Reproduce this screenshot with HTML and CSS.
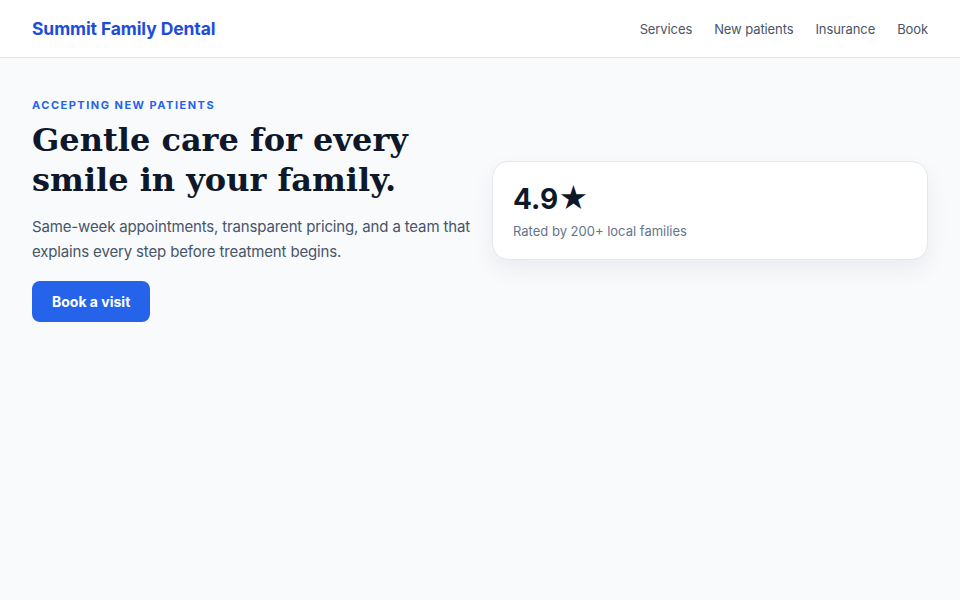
FILE: index.html
```html
<!DOCTYPE html>
<html lang="en">
<head>
  <meta charset="UTF-8">
  <meta name="viewport" content="width=device-width, initial-scale=1">
  <title>Summit Family Dental</title>
  <link rel="stylesheet" href="styles.css">
</head>
<body>
  <header class="topbar">
    <a class="brand" href="#">Summit Family Dental</a>
    <nav class="nav">
      <a href="#">Services</a>
      <a href="#">New patients</a>
      <a href="#">Insurance</a>
      <a href="#">Book</a>
    </nav>
  </header>

  <main class="hero">
    <div class="hero-text">
      <p class="eyebrow">Accepting new patients</p>
      <h1>Gentle care for every smile in your family.</h1>
      <p class="lead">Same-week appointments, transparent pricing, and a team that explains every step before treatment begins.</p>
      <a class="btn" href="#">Book a visit</a>
    </div>
    <div class="rating-card">
      <div class="score">4.9<span class="star">★</span></div>
      <div class="note">Rated by 200+ local families</div>
    </div>
  </main>
</body>
</html>
```

FILE: styles.css
```css
* { box-sizing: border-box; margin: 0; padding: 0; }
body { font-family: Inter, "Noto Sans", sans-serif; background: #f8fafc; color: #0f172a; }
a { text-decoration: none; }

.topbar { display: flex; align-items: center; justify-content: space-between; height: 58px; padding: 0 32px; background: #fff; border-bottom: 1px solid #e2e8f0; }
.brand { font-size: 17.5px; font-weight: 700; color: #1d4ed8; letter-spacing: -0.1px; }
.nav { display: flex; gap: 22px; }
.nav a { font-size: 13px; color: #475569; letter-spacing: -0.1px; }

.hero { display: grid; grid-template-columns: 1fr 1fr; gap: 24px; align-items: center; padding: 40px 32px; }
.eyebrow { font-size: 11px; font-weight: 700; letter-spacing: 1.5px; text-transform: uppercase; color: #2563eb; margin-bottom: 8px; }
.hero h1 { font-family: "DejaVu Serif", Georgia, serif; font-size: 32px; line-height: 40px; font-weight: 700; color: #0f172a; margin-bottom: 14px; }
.lead { font-size: 15px; line-height: 25px; letter-spacing: -0.15px; color: #475569; margin: 0 -14px 17px 0; }
.btn { display: inline-block; padding: 11px 20px; border-radius: 8px; background: #2563eb; color: #fff; font-size: 14px; font-weight: 700; line-height: 19px; }

.rating-card { background: #fff; border: 1px solid #e2e8f0; border-radius: 16px; padding: 20px; box-shadow: 0 10px 25px rgba(15,23,42,0.06); }
.score { font-size: 28px; font-weight: 700; line-height: 33px; color: #0f172a; }
.star { font-size: 29px; }
.note { font-size: 13px; color: #64748b; margin-top: 7px; }
```
